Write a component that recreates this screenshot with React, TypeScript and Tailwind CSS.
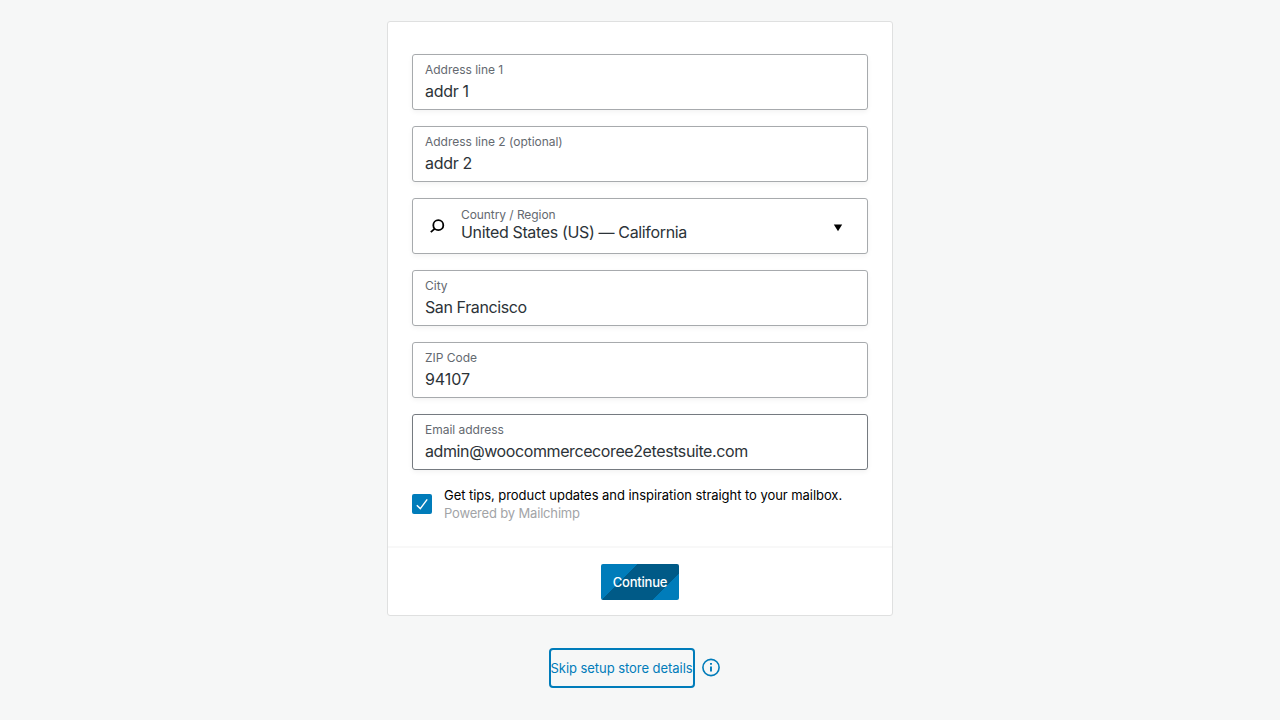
import React, { useState } from "react";

type FieldProps = {
  label: string;
  value: string;
  valueClass?: string;
  active?: boolean;
};

function Field({ label, value, valueClass = "tracking-[-0.4px]", active = false }: FieldProps) {
  return (
    <label
      className={`flex h-14 shrink-0 flex-col rounded-[3px] border bg-white px-3 pt-[7px] shadow-[0_2px_5px_rgba(0,0,0,0.05)] ${
        active ? "border-[#757a80]" : "border-[#a7aaad]"
      }`}
    >
      <span className="text-[12px] leading-4 tracking-[-0.02px] text-[#646970]">{label}</span>
      <input
        className={`mt-[3px] h-5 w-full bg-transparent text-[16px] leading-5 text-[#2c3338] outline-none ${valueClass}`}
        defaultValue={value}
      />
    </label>
  );
}

function CountrySelect() {
  return (
    <div className="flex h-14 shrink-0 items-center rounded-[3px] border border-[#a7aaad] bg-white pl-3 pr-[17px] shadow-[0_2px_5px_rgba(0,0,0,0.05)]">
      <svg className="mt-px h-6 w-6 shrink-0" viewBox="0 0 24 24" fill="none" stroke="#000" strokeWidth="1.8">
        <circle cx="13.3" cy="10.2" r="5" />
        <path d="M9.8 13.6 5.8 17.2" />
      </svg>
      <div className="mb-1 ml-3 flex flex-1 flex-col">
        <span className="text-[12px] leading-4 tracking-[-0.07px] text-[#646970]">Country / Region</span>
        <span className="-mt-px text-[16px] leading-5 tracking-[-0.35px] text-[#2c3338]">
          United States (US) — California
        </span>
      </div>
      <svg className="mt-[3px] h-6 w-6 shrink-0" viewBox="0 0 24 24">
        <path d="M7.8 8.5h8.4L12 15.3z" fill="#000" />
      </svg>
    </div>
  );
}

export default function App() {
  const [checked, setChecked] = useState(true);

  return (
    <main className="flex h-[720px] flex-col items-center overflow-hidden bg-[#f6f7f7] pt-[21px] font-['Inter','Liberation_Sans',sans-serif]">
      <section className="w-[506px] rounded-[3px] border border-[#dfe0e0] bg-white">
        <div className="flex h-[526px] flex-col gap-4 border-b-2 border-[#f8f8f8] px-6 pt-8">
          <Field label="Address line 1" value="addr 1" valueClass="tracking-[-0.3px]" />
          <Field label="Address line 2 (optional)" value="addr 2" valueClass="tracking-[-0.3px]" />
          <CountrySelect />
          <Field label="City" value="San Francisco" />
          <Field label="ZIP Code" value="94107" valueClass="tracking-[-0.05px]" />
          <Field label="Email address" value="admin@woocommercecoree2etestsuite.com" active />
          <div className="flex items-center gap-3">
            <button
              type="button"
              role="checkbox"
              aria-checked={checked}
              aria-label="Get tips"
              onClick={() => setChecked(!checked)}
              className="flex h-5 w-5 shrink-0 items-center justify-center rounded-[2px] bg-[#007cba]"
            >
              {checked && (
                <svg className="h-5 w-5" viewBox="0 0 20 20" fill="none" stroke="#fff" strokeWidth="1.4">
                  <path d="M4.8 11.2 8.3 14.6 15.2 5.4" />
                </svg>
              )}
            </button>
            <div className="flex flex-col text-[13px] leading-[18px]">
              <span className="tracking-[-0.05px] text-black">
                Get tips, product updates and inspiration straight to your mailbox.
              </span>
              <span className="tracking-[-0.17px] text-[#a2a4a7]">Powered by Mailchimp</span>
            </div>
          </div>
        </div>
        <div className="flex h-[67px] items-center justify-center">
          <button
            type="button"
            className="h-9 w-[78px] rounded-[2px] bg-[linear-gradient(-45deg,#007cba_23%,#005a87_23%,#005a87_68%,#007cba_68%)] pt-[2px] text-[13px] font-medium tracking-[-0.22px] text-white"
          >
            Continue
          </button>
        </div>
      </section>
      <div className="mt-8 flex items-center">
        <button
          type="button"
          className="ml-[-9px] h-10 w-[146px] whitespace-nowrap rounded-[4px] border-2 border-[#007cba] pt-px text-[13px] tracking-[-0.05px] text-[#007cba]"
        >
          Skip setup store details
        </button>
        <svg className="ml-1 h-6 w-6" viewBox="0 0 24 24" fill="none" stroke="#007cba" strokeWidth="1.6">
          <circle cx="12" cy="11.5" r="8.1" />
          <path d="M12 10.4v5.2M12 7v1.8" strokeWidth="1.9" />
        </svg>
      </div>
    </main>
  );
}
